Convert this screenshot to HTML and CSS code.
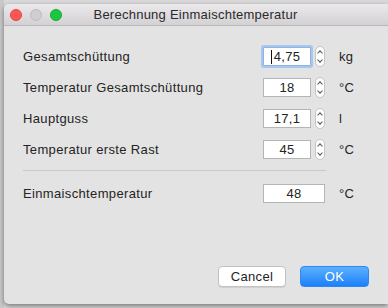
FILE: index.html
```html
<!DOCTYPE html>
<html lang="de">
<head>
  <meta charset="UTF-8">
  <title>Berechnung Einmaischtemperatur</title>
  <link rel="stylesheet" href="styles.css">
</head>
<body>
  <div class="desktop">
    <div class="window">
      <div class="titlebar">
        <div class="lights">
          <span class="light red"></span>
          <span class="light gray"></span>
          <span class="light green"></span>
        </div>
        <div class="title">Berechnung Einmaischtemperatur</div>
      </div>

      <div class="content">
        <div class="row">
          <div class="label">Gesamtschüttung</div>
          <div class="field focused"><span class="caret"></span>4,75</div>
          <div class="stepper"><span class="up"></span><span class="down"></span></div>
          <div class="unit">kg</div>
        </div>
        <div class="row">
          <div class="label">Temperatur Gesamtschüttung</div>
          <div class="field">18</div>
          <div class="stepper"><span class="up"></span><span class="down"></span></div>
          <div class="unit">°C</div>
        </div>
        <div class="row">
          <div class="label">Hauptguss</div>
          <div class="field">17,1</div>
          <div class="stepper"><span class="up"></span><span class="down"></span></div>
          <div class="unit">l</div>
        </div>
        <div class="row">
          <div class="label">Temperatur erste Rast</div>
          <div class="field">45</div>
          <div class="stepper"><span class="up"></span><span class="down"></span></div>
          <div class="unit">°C</div>
        </div>

        <div class="separator"></div>

        <div class="row">
          <div class="label">Einmaischtemperatur</div>
          <div class="field result">48</div>
          <div class="unit">°C</div>
        </div>
      </div>

      <div class="footer">
        <button class="btn cancel">Cancel</button>
        <button class="btn ok">OK</button>
      </div>
    </div>
  </div>
</body>
</html>
```

FILE: styles.css
```css
:root {
  --win-bg: #e3e3e3;
  --text: #242424;
  --field-border: #b5b5b5;
}
body {
  margin: 0;
  background: #8f8f8f;
  font-family: 'Liberation Sans', Arial, sans-serif;
  font-size: 13px;
  color: var(--text);
}
.desktop {
  width: 388px;
  height: 308px;
  overflow: hidden;
  background: linear-gradient(to right, #c9c9c9 0, #c9c9c9 4px, #d9d9d9 4px);
}
.window {
  margin: 4px 0 0 4px;
  width: 384px;
  height: 300px;
  background: var(--win-bg);
  border-radius: 5px 0 0 5px;
  box-shadow: 0 2px 5px rgba(0,0,0,0.45);
  display: flex;
  flex-direction: column;
}
.titlebar {
  height: 21px;
  border-bottom: 1px solid #b8b8b8;
  background: linear-gradient(#ebe9eb, #d3d1d3);
  border-radius: 5px 0 0 0;
  display: flex;
  align-items: center;
}
.lights {
  display: flex;
  gap: 8px;
  padding-left: 6px;
}
.light {
  width: 12px;
  height: 12px;
  border-radius: 50%;
  box-sizing: border-box;
}
.light.red { background: #fc5753; border: 1px solid #df4744; }
.light.gray { background: #d0ced0; border: 1px solid #bdbbbd; }
.light.green { background: #1bc740; border: 1px solid #15a934; }
.title {
  flex: 1;
  text-align: center;
  margin-left: -59px;
  font-size: 13px;
  letter-spacing: 0.25px;
  color: #2b2b2b;
}
.content {
  padding: 15px 19px 0;
}
.row {
  height: 31px;
  display: flex;
  align-items: center;
}
.label {
  flex: 1;
  letter-spacing: 0.35px;
}
.field {
  width: 48px;
  height: 19px;
  box-sizing: border-box;
  background: white;
  border: 1px solid var(--field-border);
  text-align: center;
  line-height: 17px;
  letter-spacing: 0.3px;
  position: relative;
}
.field.focused {
  border-color: #8fb4e4;
  box-shadow: 0 0 0 2px #a8c6ee;
  border-radius: 1px;
}
.caret {
  position: absolute;
  left: 7px;
  top: 2px;
  width: 1px;
  height: 14px;
  background: #111;
}
.field.result {
  width: 62px;
}
.stepper {
  width: 10px;
  height: 21px;
  box-sizing: border-box;
  margin-left: 4px;
  background: white;
  border: 1px solid #c4c4c4;
  border-radius: 5px;
  display: flex;
  flex-direction: column;
  align-items: center;
  justify-content: center;
  gap: 3px;
}
.stepper span {
  width: 3px;
  height: 3px;
  border: solid #555;
  border-width: 1px 0 0 1px;
}
.stepper .up { transform: rotate(45deg); margin-top: 2px; }
.stepper .down { transform: rotate(225deg); margin-bottom: 2px; }
.unit {
  width: 30px;
  margin-left: 14px;
  letter-spacing: 0.3px;
}
.separator {
  height: 1px;
  background: #c9c9c9;
  margin: 5px 43px 7px 0;
}
.footer {
  margin-top: auto;
  padding: 0 19px 17px;
  display: flex;
  justify-content: flex-end;
  gap: 14px;
}
.btn {
  width: 68px;
  height: 21px;
  font-family: inherit;
  font-size: 13px;
  letter-spacing: 0.3px;
  border-radius: 4px;
  padding: 0;
}
.cancel {
  background: white;
  color: var(--text);
  border: 1px solid #c2c2c2;
  box-shadow: 0 1px 0 rgba(0,0,0,0.08);
}
.ok {
  width: 69px;
  color: white;
  border: 1px solid #2f86f6;
  background: linear-gradient(#5eb0fd, #1b80fa);
}
```
